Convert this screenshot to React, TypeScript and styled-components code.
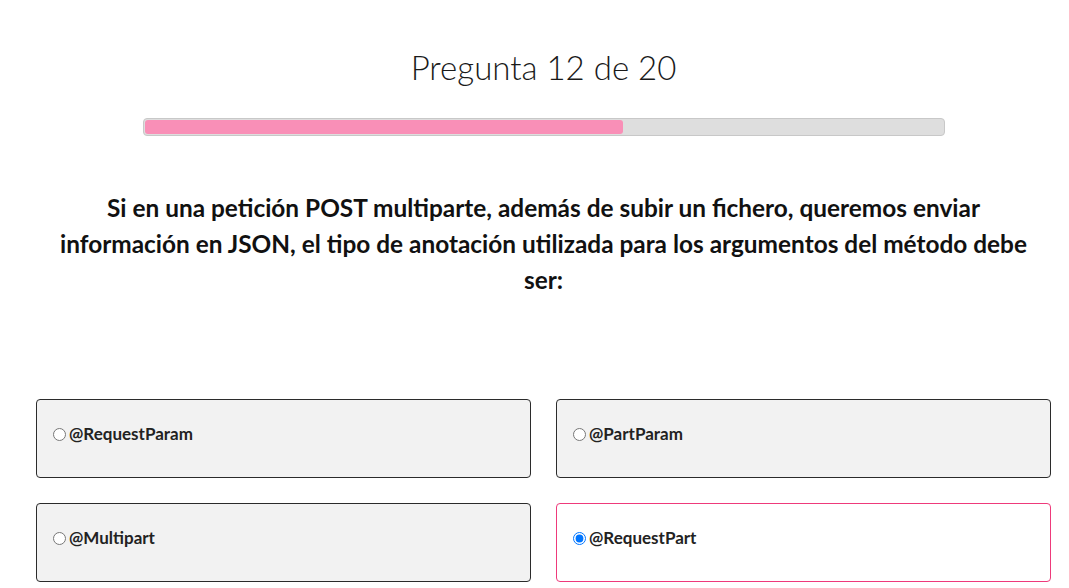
import React, { useState } from "react";
import styled, { createGlobalStyle } from "styled-components";

const Global = createGlobalStyle`
  html, body { margin: 0; padding: 0; background: #fff; }
  body { font-family: Lato, "Noto Sans", sans-serif; color: #111; }
  * { box-sizing: border-box; }
`;

const Page = styled.main`
  padding: 0 18px 0 36px;
  display: flex;
  flex-direction: column;
  align-items: center;
`;

const Title = styled.h1`
  margin: 47px 0 0;
  font-size: 33px;
  font-weight: 300;
  line-height: 40px;
  color: #1a1a1a;
  text-align: center;
`;

const Track = styled.div`
  margin-top: 31px;
  width: 802px;
  height: 18px;
  background: #dedede;
  border: 1px solid #c8c8c8;
  border-radius: 4px;
  padding: 1px;
  display: flex;
`;

const Fill = styled.div`
  height: 100%;
  background: #f98fb7;
  border-radius: 3px;
`;

const Question = styled.h2`
  margin: 54px 0 0;
  font-size: 24.4px;
  font-weight: 700;
  line-height: 36px;
  text-align: center;
  color: #111;
  max-width: 990px;
`;

const Grid = styled.div`
  margin-top: 101px;
  width: 100%;
  display: grid;
  grid-template-columns: 1fr 1fr;
  gap: 25px;
`;

const Card = styled.label<{ $selected: boolean }>`
  display: flex;
  align-items: center;
  padding: 24px 16px 33px;
  border: 1px solid ${(p) => (p.$selected ? "#ee3a7b" : "#2b2b2b")};
  border-radius: 4px;
  background: ${(p) => (p.$selected ? "#fff" : "#f2f2f2")};
  cursor: pointer;
`;

const Radio = styled.input`
  width: 13px;
  height: 13px;
  margin: 0 3px 0 0;
`;

const OptionText = styled.span`
  font-size: 17px;
  font-weight: 700;
  line-height: 20px;
  color: #222;
`;

const options = ["@RequestParam", "@PartParam", "@Multipart", "@RequestPart"];

export default function App() {
  const [sel, setSel] = useState(3);
  const current = 12;
  const total = 20;
  return (
    <>
      <Global />
      <Page>
        <Title>
          Pregunta {current} de {total}
        </Title>
        <Track>
          <Fill style={{ width: `${(current / total) * 100}%` }} />
        </Track>
        <Question>
          Si en una petición POST multiparte, además de subir un fichero, queremos enviar
          información en JSON, el tipo de anotación utilizada para los argumentos del método
          debe ser:
        </Question>
        <Grid>
          {options.map((o, i) => (
            <Card key={o} $selected={sel === i}>
              <Radio type="radio" name="q" checked={sel === i} onChange={() => setSel(i)} />
              <OptionText>{o}</OptionText>
            </Card>
          ))}
        </Grid>
      </Page>
    </>
  );
}
